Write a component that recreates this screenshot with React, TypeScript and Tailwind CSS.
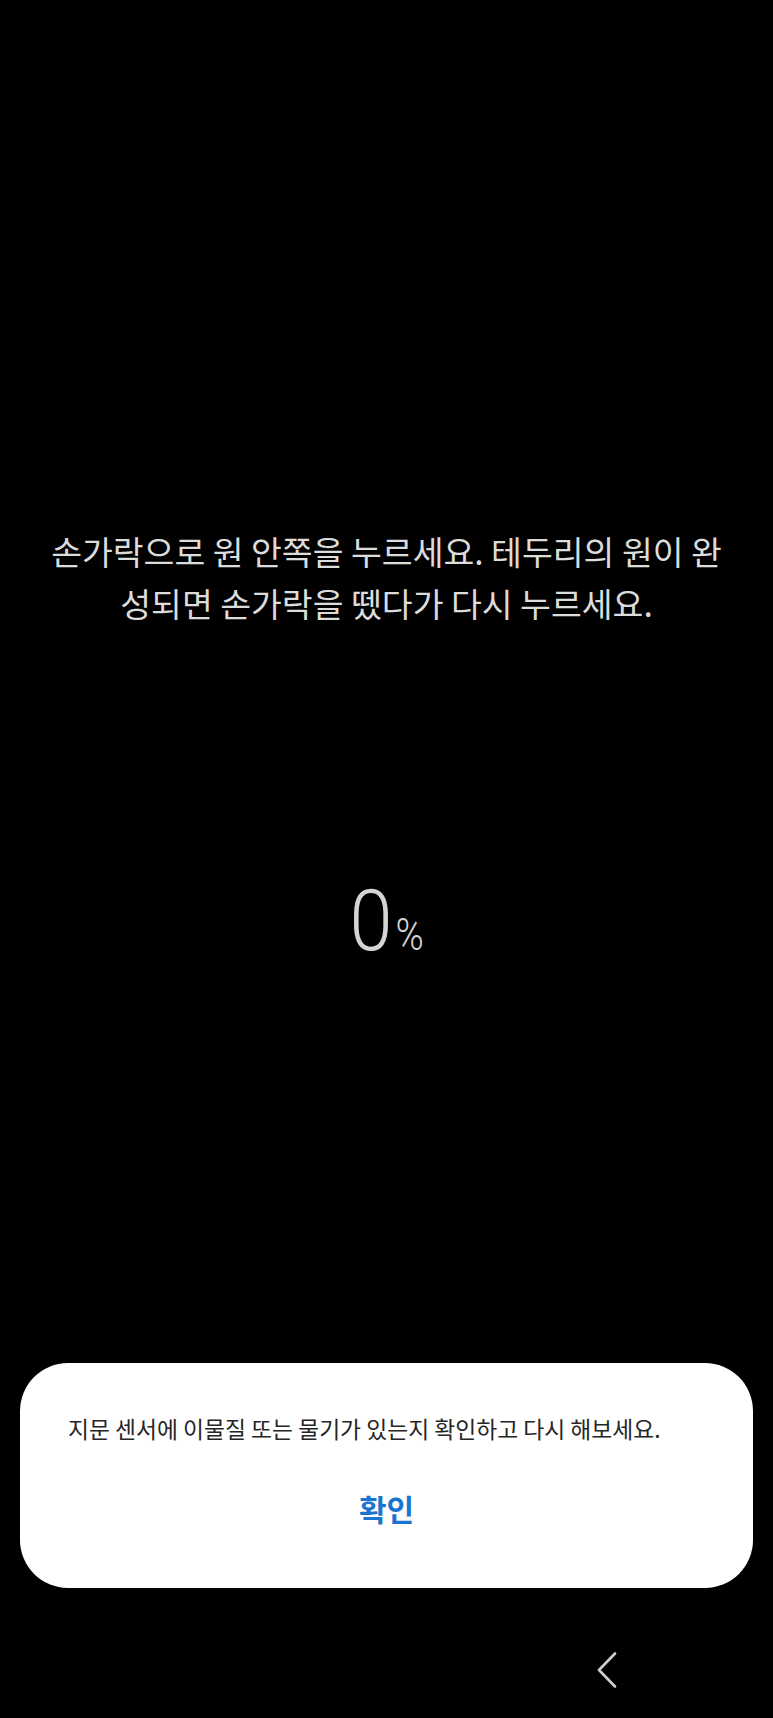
import React from "react";

const kr = { fontFamily: '"Noto Sans CJK KR", "Noto Sans", sans-serif' };

const NavSlot = ({ children }: { children?: React.ReactNode }) => (
  <div className="w-[220px] flex justify-center">{children}</div>
);

export default function App() {
  return (
    <div className="w-full h-[1718px] bg-black flex flex-col overflow-hidden" style={kr}>
      {/* instruction */}
      <p className="pt-[525px] px-[46px] text-center text-[33.5px] leading-[52px] text-[#dcdcdc]">
        손가락으로 원 안쪽을 누르세요. 테두리의 원이 완성되면 손가락을 뗐다가 다시 누르세요.
      </p>

      {/* progress */}
      <div
        className="mt-[249px] flex items-baseline justify-center text-[#d4d4d4] leading-none"
        style={{ fontFamily: "Roboto, 'Liberation Sans', sans-serif" }}
      >
        <span className="inline-block text-[86px] font-light scale-x-[0.9] -mr-[2px]">0</span>
        <span className="inline-block text-[45px] font-light scale-x-[0.85]">%</span>
      </div>

      {/* dialog */}
      <div className="mt-[399px] mx-[20px] h-[225px] rounded-[48px] bg-white flex flex-col">
        <p className="pt-[51px] pl-[48px] pr-[24px] text-[22.8px] leading-[30px] text-[#262626]">
          지문 센서에 이물질 또는 물기가 있는지 확인하고 다시 해보세요.
        </p>
        <button className="mt-[45px] self-center text-[30px] leading-[38px] font-bold text-[#1b74d0]">
          확인
        </button>
      </div>

      {/* navigation bar */}
      <div className="h-[130px] pt-[64px] flex justify-center">
        <NavSlot />
        <NavSlot />
        <NavSlot>
          <svg width="24" height="36" viewBox="0 0 24 36" fill="none">
            <polyline
              points="20,1.5 4,18 20,34.5"
              stroke="#cfcfcf"
              strokeWidth="2.6"
              strokeLinecap="round"
              strokeLinejoin="round"
            />
          </svg>
        </NavSlot>
      </div>
    </div>
  );
}
